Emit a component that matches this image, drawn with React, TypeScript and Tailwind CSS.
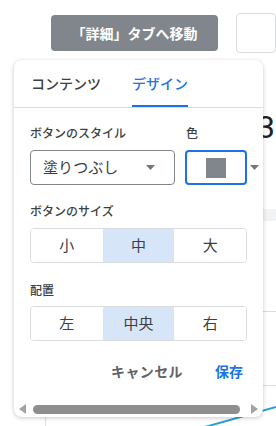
import type { ReactNode } from "react";

const font = { fontFamily: '"Noto Sans CJK JP", "Noto Sans", Roboto, sans-serif' };

function Label({ children }: { children: ReactNode }) {
  return <div className="text-[12px] leading-4 font-medium text-[#3c4043]">{children}</div>;
}

function Caret({ className = "" }: { className?: string }) {
  return (
    <svg width="9" height="5" viewBox="0 0 9 5" className={className}>
      <path d="M0 0h9L4.5 5z" fill="#757575" />
    </svg>
  );
}

function Segmented({ items, active }: { items: string[]; active: number }) {
  return (
    <div className="flex h-[35px] border border-[#dadce0] rounded-[4px] overflow-hidden">
      {items.map((it, i) => (
        <div
          key={it}
          className={`flex-1 flex items-center justify-center text-[15px] text-[#3c4043] ${
            i === active ? "bg-[#d7e5f8]" : "bg-white"
          }`}
        >
          {it}
        </div>
      ))}
    </div>
  );
}

export default function App() {
  return (
    <div className="relative w-[276px] h-[426px] bg-white overflow-hidden" style={font}>
      {/* page behind the popover */}
      <div className="flex items-start pt-[13px] pl-[51px]">
        <button className="mt-[2px] w-[176px] h-[36px] rounded-[4px] bg-[#80868b] text-white text-[14px] font-bold">
          「詳細」タブへ移動
        </button>
        <div className="ml-[18px] w-[40px] h-[40px] border border-[#dadce0] rounded-[4px] shrink-0" />
      </div>
      <div className="absolute left-[257px] top-[107px] text-[32px] leading-10 text-[#202124]" style={{ fontFamily: "Roboto, sans-serif" }}>
        3
      </div>
      <div className="absolute left-[263px] top-[209px] w-[20px] h-[12px] bg-[#f1f3f4]" />
      <div className="absolute left-[263px] top-[311px] w-[20px] h-px bg-[#dadce0]" />
      <div className="absolute left-[263px] top-[385px] w-[20px] h-px bg-[#dadce0]" />
      <div className="absolute left-[45px] top-[410px] w-px h-[20px] bg-[#e0e0e0]" />
      <svg className="absolute left-0 top-0" width="276" height="426">
        <path d="M205 427 L276 407" stroke="#2a9fd6" strokeWidth="2" fill="none" />
      </svg>

      {/* popover */}
      <div className="absolute left-[14px] top-[60px] w-[249px] h-[357px] bg-white rounded-lg shadow-[0_1px_4px_rgba(0,0,0,0.22)] flex flex-col">
        <div className="flex h-[48px] pl-[17px] border-b border-[#dadce0]">
          <div className="flex items-center text-[14px] font-medium text-[#3c4043]">コンテンツ</div>
          <div className="ml-[31px] flex items-center text-[14px] font-medium text-[#1a73e8] border-b-2 border-[#1a73e8] pt-[2px]">
            デザイン
          </div>
        </div>

        <div className="px-[16px] pt-[17px]">
          <div className="flex gap-[10px]">
            <div className="w-[145px] shrink-0">
              <Label>ボタンのスタイル</Label>
            </div>
            <div className="pl-[1px]">
              <Label>色</Label>
            </div>
          </div>
          <div className="mt-[9px] flex items-center gap-[10px]">
            <div className="w-[145px] h-[35px] shrink-0 border border-[#80868b] rounded-[4px] flex items-center pl-[12px] pr-[19px]">
              <span className="flex-1 text-[15px] text-[#3c4043]">塗りつぶし</span>
              <Caret />
            </div>
            <div className="w-[62px] h-[35px] shrink-0 border-2 border-[#1a73e8] rounded-[4px] flex items-center justify-center">
              <div className="w-[20px] h-[20px] bg-[#80868b]" />
            </div>
            <Caret className="shrink-0 -ml-[7px]" />
          </div>

          <div className="mt-[18px]">
            <Label>ボタンのサイズ</Label>
          </div>
          <div className="mt-[9px]">
            <Segmented items={["小", "中", "大"]} active={1} />
          </div>

          <div className="mt-[19px]">
            <Label>配置</Label>
          </div>
          <div className="mt-[8px]">
            <Segmented items={["左", "中央", "右"]} active={1} />
          </div>
        </div>

        <div className="mt-[20px] flex justify-end gap-[32px] pr-[20px] text-[14px] font-bold">
          <span className="text-[#5f6368] tracking-[0.4px]">キャンセル</span>
          <span className="text-[#1a73e8]">保存</span>
        </div>

        <div className="mt-auto mb-[3px] h-[10px] flex items-center px-[5px]">
          <svg width="7" height="10" viewBox="0 0 7 10">
            <path d="M7 0v10L0 5z" fill="#a3a3a3" />
          </svg>
          <div className="ml-[7px] w-[207px] h-[9px] rounded-full bg-[#8e8e8e]" />
          <div className="flex-1" />
          <svg width="7" height="10" viewBox="0 0 7 10">
            <path d="M0 0v10L7 5z" fill="#a3a3a3" />
          </svg>
        </div>
      </div>
    </div>
  );
}
